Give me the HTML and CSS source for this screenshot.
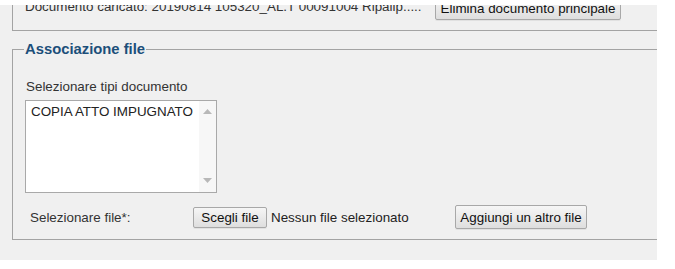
FILE: index.html
```html
<!DOCTYPE html>
<html>
<head>
<meta charset="utf-8">
<link rel="stylesheet" href="styles.css">
</head>
<body>
<div class="panel">
  <fieldset class="fs fs-top">
    <div class="doc-row">
      <span class="doc-text">Documento caricato: 20190814 105320_AL.T 00091004 Ripalip.....</span>
      <button class="btn btn-del">Elimina documento principale</button>
    </div>
  </fieldset>
  <fieldset class="fs fs-assoc">
    <legend class="legend">Associazione file</legend>
    <div class="label-types">Selezionare tipi documento</div>
    <div class="listbox">
      <div class="list-items">
        <div class="list-item">COPIA ATTO IMPUGNATO</div>
      </div>
      <div class="scrollbar">
        <svg class="arrow" width="9" height="5" viewBox="0 0 9 5"><path d="M0 5 L4.5 0 L9 5 Z" fill="#b8b8b8"/></svg>
        <svg class="arrow" width="9" height="5" viewBox="0 0 9 5"><path d="M0 0 L4.5 5 L9 0 Z" fill="#b8b8b8"/></svg>
      </div>
    </div>
    <div class="file-row">
      <span class="file-label">Selezionare file*:</span>
      <div class="file-input">
        <button class="btn btn-choose">Scegli file</button>
        <span class="file-none">Nessun file selezionato</span>
      </div>
      <button class="btn btn-add">Aggiungi un altro file</button>
    </div>
  </fieldset>
</div>
</body>
</html>
```
FILE: styles.css
```css
html, body {
  margin: 0;
  padding: 0;
  background: #ffffff;
}
body {
  padding-top: 5px;
}
.panel {
  width: 657px;
  height: 255px;
  background: #f0f0f0;
  overflow: hidden;
  font-family: "Liberation Sans", Arial, sans-serif;
  font-size: 13.4px;
  color: #333333;
}
.fs {
  border: 1px solid #a3a3a3;
  margin: 0 -30px 0 12px;
  min-width: 0;
}
.fs-top {
  margin-top: -20px;
  height: 46px;
  padding: 0 12px;
  box-sizing: border-box;
}
.doc-row {
  display: flex;
  align-items: flex-start;
  gap: 9px;
  padding-top: 10px;
}
.doc-text {
  flex: 0 0 401px;
  white-space: nowrap;
  overflow: hidden;
  color: #333;
  padding-top: 3px;
}
.btn {
  font-family: "Liberation Sans", Arial, sans-serif;
  font-size: 13.4px;
  color: #111;
  background: linear-gradient(#f6f6f6, #dedede);
  border: 1px solid #a8a8a8;
  border-radius: 2px;
  padding: 0 4px;
  height: 22px;
  box-sizing: border-box;
  box-shadow: 0 1px 0 rgba(0,0,0,0.06);
  white-space: nowrap;
}
.btn-del {
  flex: 0 0 186px;
  height: 24px;
}
.fs-assoc {
  margin-top: 10px;
  padding: 0 12px;
  height: 199px;
  box-sizing: border-box;
}
.legend {
  font-weight: bold;
  font-size: 14.8px;
  color: #1c4f7a;
  padding: 0 1px;
  margin-left: -1px;
}
.label-types {
  margin-top: 22px;
  line-height: 15px;
  padding-left: 1px;
}
.listbox {
  margin-top: 6px;
  width: 192px;
  height: 93px;
  box-sizing: border-box;
  border: 1px solid #a9a9a9;
  background: #ffffff;
  display: flex;
}
.list-items {
  flex: 1;
  padding: 3px 5px;
}
.list-item {
  line-height: 15px;
  color: #222;
}
.scrollbar {
  width: 17px;
  background: #f7f7f7;
  display: flex;
  flex-direction: column;
  justify-content: space-between;
  align-items: center;
  padding: 8px 0 9px;
  box-sizing: border-box;
}
.arrow {
  display: block;
}
.file-row {
  display: flex;
  align-items: center;
  margin-top: 12px;
  padding-left: 5px;
}
.file-label {
  width: 163px;
}
.file-input {
  display: flex;
  align-items: center;
  gap: 4px;
  width: 262px;
}
.btn-choose {
  height: 21px;
  width: 74px;
}
.file-none {
  color: #222;
}
.btn-add {
  height: 24px;
  width: 132px;
}
```
